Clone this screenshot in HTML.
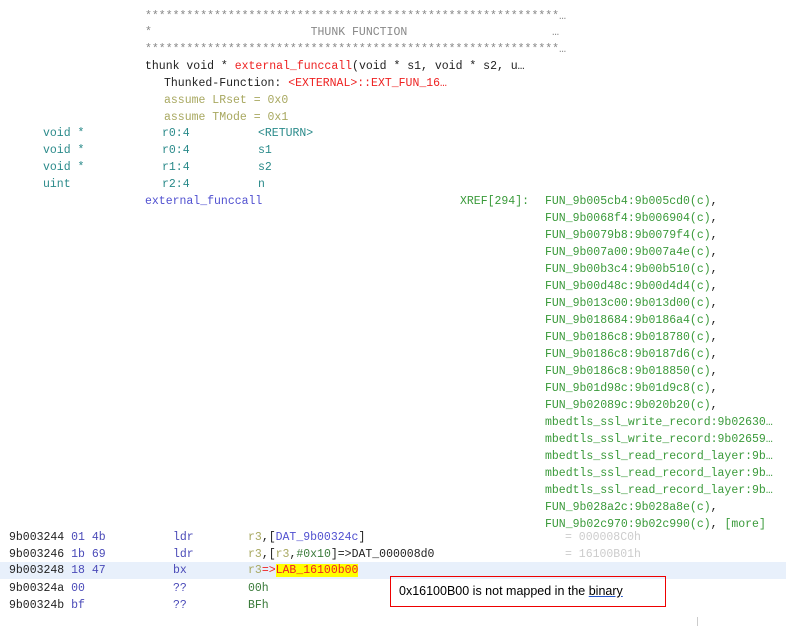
<!DOCTYPE html><html><head><style>
body{margin:0;width:792px;height:626px;background:#fff;position:relative;overflow:hidden;font-family:"Liberation Mono",monospace;font-size:11.5px}
.l{position:absolute;white-space:pre;line-height:17px;height:17px}
.g{color:#888}.k{color:#222}.r{color:#e22}.o{color:#a8a860}.t{color:#2a8a8a}.b{color:#5050d0}.gr{color:#3a9a3a}.c{color:#222}.lg{color:#ccc}.bl{color:#4a4ab8}.dg{color:#3a7a3a}
</style></head><body>
<div style="position:absolute;left:0;top:562px;width:786px;height:17px;background:#e8f0fb"></div>
<div class="l g" style="left:145px;top:8px">************************************************************…</div>
<div class="l g" style="left:145px;top:24px">*                       THUNK FUNCTION                     …</div>
<div class="l g" style="left:145px;top:41px">************************************************************…</div>
<div class="l k" style="left:145px;top:58px">thunk void * <span class="r">external_funccall</span>(void * s1, void * s2, u…</div>
<div class="l k" style="left:164px;top:75px">Thunked-Function: <span class="r">&lt;EXTERNAL&gt;::EXT_FUN_16…</span></div>
<div class="l o" style="left:164px;top:92px">assume LRset = 0x0</div>
<div class="l o" style="left:164px;top:109px">assume TMode = 0x1</div>
<div class="l t" style="left:43px;top:125px">void *</div><div class="l t" style="left:162px;top:125px">r0:4</div><div class="l t" style="left:258px;top:125px">&lt;RETURN&gt;</div>
<div class="l t" style="left:43px;top:142px">void *</div><div class="l t" style="left:162px;top:142px">r0:4</div><div class="l t" style="left:258px;top:142px">s1</div>
<div class="l t" style="left:43px;top:159px">void *</div><div class="l t" style="left:162px;top:159px">r1:4</div><div class="l t" style="left:258px;top:159px">s2</div>
<div class="l t" style="left:43px;top:176px">uint</div><div class="l t" style="left:162px;top:176px">r2:4</div><div class="l t" style="left:258px;top:176px">n</div>
<div class="l b" style="left:145px;top:193px">external_funccall</div>
<div class="l gr" style="left:460px;top:193px">XREF[294]:</div>
<div class="l gr" style="left:545px;top:193px">FUN_9b005cb4:9b005cd0(c)<span class="c">,</span>
FUN_9b0068f4:9b006904(c)<span class="c">,</span>
FUN_9b0079b8:9b0079f4(c)<span class="c">,</span>
FUN_9b007a00:9b007a4e(c)<span class="c">,</span>
FUN_9b00b3c4:9b00b510(c)<span class="c">,</span>
FUN_9b00d48c:9b00d4d4(c)<span class="c">,</span>
FUN_9b013c00:9b013d00(c)<span class="c">,</span>
FUN_9b018684:9b0186a4(c)<span class="c">,</span>
FUN_9b0186c8:9b018780(c)<span class="c">,</span>
FUN_9b0186c8:9b0187d6(c)<span class="c">,</span>
FUN_9b0186c8:9b018850(c)<span class="c">,</span>
FUN_9b01d98c:9b01d9c8(c)<span class="c">,</span>
FUN_9b02089c:9b020b20(c)<span class="c">,</span>
mbedtls_ssl_write_record:9b02630…
mbedtls_ssl_write_record:9b02659…
mbedtls_ssl_read_record_layer:9b…
mbedtls_ssl_read_record_layer:9b…
mbedtls_ssl_read_record_layer:9b…
FUN_9b028a2c:9b028a8e(c)<span class="c">,</span>
FUN_9b02c970:9b02c990(c)<span class="c">,</span> [more]</div>
<div class="l" style="left:9px;top:529px"><span class="k">9b003244</span> <span class="bl">01 4b</span></div><div class="l bl" style="left:173px;top:529px">ldr</div><div class="l" style="left:248px;top:529px"><span class="o">r3</span><span class="k">,[</span><span class="b">DAT_9b00324c</span><span class="k">]</span></div><div class="l lg" style="left:565px;top:529px">= 000008C0h</div>
<div class="l" style="left:9px;top:546px"><span class="k">9b003246</span> <span class="bl">1b 69</span></div><div class="l bl" style="left:173px;top:546px">ldr</div><div class="l" style="left:248px;top:546px"><span class="o">r3</span><span class="k">,[</span><span class="o">r3</span><span class="k">,</span><span class="dg">#0x10</span><span class="k">]=&gt;</span><span class="k">DAT_000008d0</span></div><div class="l lg" style="left:565px;top:546px">= 16100B01h</div>
<div class="l" style="left:9px;top:562px"><span class="k">9b003248</span> <span class="bl">18 47</span></div><div class="l bl" style="left:173px;top:562px">bx</div><div class="l" style="left:248px;top:562px"><span class="o">r3</span><span class="r">=&gt;</span><span class="r" style="background:#ffff00">LAB_16100b00</span></div>
<div class="l" style="left:9px;top:580px"><span class="k">9b00324a</span> <span class="bl">00</span></div><div class="l bl" style="left:173px;top:580px">??</div><div class="l dg" style="left:248px;top:580px">00h</div>
<div class="l" style="left:9px;top:597px"><span class="k">9b00324b</span> <span class="bl">bf</span></div><div class="l bl" style="left:173px;top:597px">??</div><div class="l dg" style="left:248px;top:597px">BFh</div>
<div style="position:absolute;left:390px;top:576px;width:276px;height:31px;border:1px solid #e00;box-sizing:border-box;font-family:'Liberation Sans',sans-serif;font-size:12.5px;color:#000;line-height:29px;padding-left:8px">0x16100B00 is not mapped in the <span style="text-decoration:underline;text-decoration-color:#2255cc">binary</span></div>
<div style="position:absolute;left:697px;top:617px;width:1px;height:9px;background:#ccc"></div>
</body></html>
